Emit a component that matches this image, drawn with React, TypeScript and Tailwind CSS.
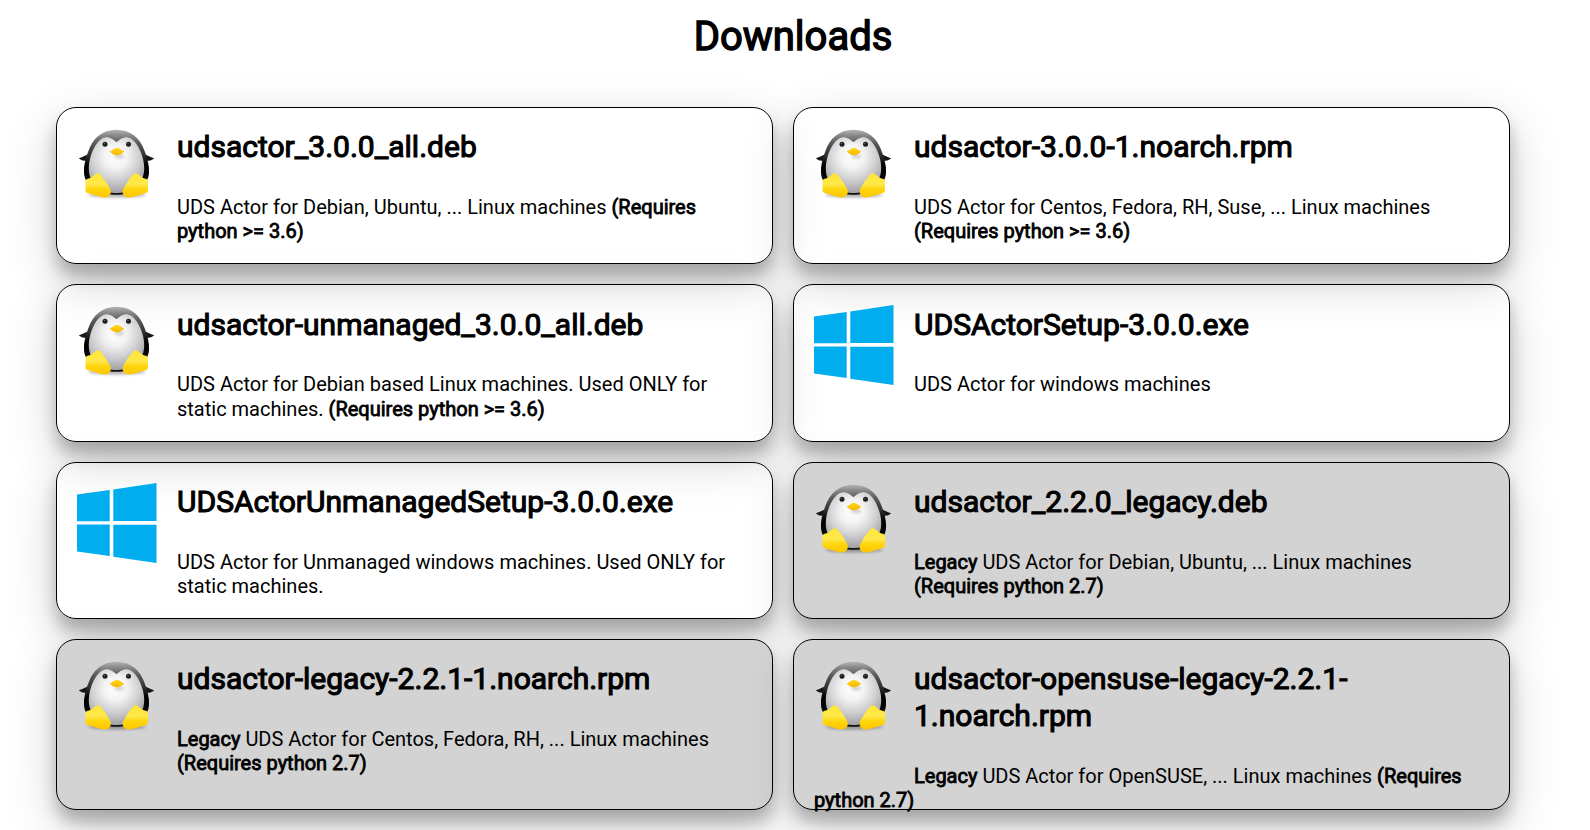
import { useId, type ReactNode } from "react";

function Penguin() {
  const id = useId().replace(/[^a-zA-Z0-9]/g, "");
  const ref = (name: string) => `url(#${name}${id})`;
  return (
    <svg viewBox="0 0 80 80" className="block h-20 w-20" aria-hidden="true">
      <defs>
        <linearGradient id={`coat${id}`} x1="0" y1="0" x2="0" y2="1">
          <stop offset="0" stopColor="#b4b4b4" />
          <stop offset="0.08" stopColor="#8c8c8c" />
          <stop offset="0.2" stopColor="#5c5c5c" />
          <stop offset="0.38" stopColor="#333" />
          <stop offset="0.55" stopColor="#000" />
          <stop offset="1" stopColor="#111" />
        </linearGradient>
        <radialGradient id={`belly${id}`} cx="0.48" cy="0.34" r="0.7">
          <stop offset="0" stopColor="#fff" />
          <stop offset="0.3" stopColor="#f3f3f4" />
          <stop offset="0.62" stopColor="#cfcfd1" />
          <stop offset="1" stopColor="#98989b" />
        </radialGradient>
        <linearGradient id={`foot${id}`} x1="0" y1="0" x2="0" y2="1">
          <stop offset="0" stopColor="#ffe634" />
          <stop offset="0.45" stopColor="#ffe84c" />
          <stop offset="0.65" stopColor="#ffd60c" />
          <stop offset="1" stopColor="#ffc400" />
        </linearGradient>
        <linearGradient id={`beak${id}`} x1="0" y1="0" x2="0" y2="1">
          <stop offset="0" stopColor="#ffd91c" />
          <stop offset="1" stopColor="#f7b500" />
        </linearGradient>
        <filter id={`soft${id}`} x="-20%" y="-100%" width="140%" height="300%">
          <feGaussianBlur stdDeviation="1.6" />
        </filter>
      </defs>
      <g transform="translate(0 0.8)">
        <ellipse cx="40" cy="66" rx="29" ry="2.6" fill="#000" opacity="0.3" filter={ref("soft")} />
        <path d="M10 73h22M48 73h22" stroke="#ffd45a" strokeWidth="3" opacity="0.22" filter={ref("soft")} />
        <path d="M13 25C9 26 6 28.300 1.800 29.500c2 2.200 5 2.700 9 2.700M66 25c4 1 7 3.300 11.200 4.500-2 2.200-5 2.700-9 2.700" fill="#161616" />
        <path
          d="M39.500 1C25 1 15.500 10 11.500 22C8.500 30 6.500 37 7 44C7.500 56 20 66 39.500 66S71.500 56 72 44C72.500 37 70.500 30 67.500 22C63.500 10 54 1 39.500 1Z"
          fill={ref("coat")}
        />
        <path
          d="M39.500 13.500C36.500 11 33.500 8.500 29 8.500C21.500 9 15.500 20 13 30C10 42 12.500 52 20.500 59C26.500 63.500 33.500 64.300 39.500 64.300S52.500 63.500 58.500 59C66.500 52 69 42 66 30C63.500 20 57.500 9 50 8.500C45.500 8.500 42.500 11 39.500 13.500Z"
          fill={ref("belly")}
        />
        <circle cx="28" cy="15.500" r="2.500" fill="#1c1c1c" />
        <circle cx="51.500" cy="15.500" r="2.500" fill="#1c1c1c" />
        <circle cx="27.500" cy="14.800" r="0.700" fill="#777" />
        <circle cx="51" cy="14.800" r="0.700" fill="#777" />
        <ellipse cx="42" cy="27.500" rx="5" ry="2" fill="#777" opacity="0.35" filter={ref("soft")} />
        <path
          d="M32.700 22.700C35.200 21.700 37.700 19 40 19S44.700 21.700 47.200 22.700C45.200 24.800 42.700 26.500 40 26.500S34.700 24.800 32.700 22.700Z"
          fill={ref("beak")}
        />
        <path
          d="M19.500 44.600Q21.300 44 23 45.400C27 49.500 31 55.500 33.600 61C34.700 64.500 32 69 28 68.800Q24 68.600 10 64Q8.500 63.300 8.500 61.500V52.500Q8.500 50.500 10.500 50C14.500 49.500 16.500 46.200 19.500 44.600Z"
          fill={ref("foot")}
        />
        <path
          d="M60 44.600Q58.200 44 56.500 45.400C52.500 49.500 48.500 55.500 45.900 61C44.800 64.500 47.500 69 51.500 68.800Q55.500 68.600 69.500 64Q71 63.300 71 61.500V52.500Q71 50.500 69 50C65 49.500 63 46.200 60 44.600Z"
          fill={ref("foot")}
        />
      </g>
    </svg>
  );
}

function Windows() {
  return (
    <svg viewBox="0 0 80 80" className="block h-20 w-20" fill="#00adef" aria-hidden="true">
      <path d="M0 11.400 32.700 6.900V38.300H0ZM36.300 6.400 79.500 0V38.100H36.300ZM0 41.500H32.700V73L0 68.600ZM36.300 41.800H79.500V80L36.300 73.700Z" />
    </svg>
  );
}

function Strong({ children }: { children: ReactNode }) {
  return <b className="font-normal [-webkit-text-stroke:0.8px_black]">{children}</b>;
}

type Item = { name: string; os: "linux" | "windows"; legacy?: boolean; text: ReactNode };

const items: Item[] = [
  {
    name: "udsactor_3.0.0_all.deb",
    os: "linux",
    text: (
      <>
        UDS Actor for Debian, Ubuntu, ... Linux machines <Strong>(Requires python &gt;= 3.6)</Strong>
      </>
    ),
  },
  {
    name: "udsactor-3.0.0-1.noarch.rpm",
    os: "linux",
    text: (
      <>
        UDS Actor for Centos, Fedora, RH, Suse, ... Linux machines <Strong>(Requires python &gt;= 3.6)</Strong>
      </>
    ),
  },
  {
    name: "udsactor-unmanaged_3.0.0_all.deb",
    os: "linux",
    text: (
      <>
        UDS Actor for Debian based Linux machines. Used ONLY for static machines.{" "}
        <Strong>(Requires python &gt;= 3.6)</Strong>
      </>
    ),
  },
  { name: "UDSActorSetup-3.0.0.exe", os: "windows", text: "UDS Actor for windows machines" },
  {
    name: "UDSActorUnmanagedSetup-3.0.0.exe",
    os: "windows",
    text: "UDS Actor for Unmanaged windows machines. Used ONLY for static machines.",
  },
  {
    name: "udsactor_2.2.0_legacy.deb",
    os: "linux",
    legacy: true,
    text: (
      <>
        <Strong>Legacy</Strong> UDS Actor for Debian, Ubuntu, ... Linux machines{" "}
        <Strong>(Requires python 2.7)</Strong>
      </>
    ),
  },
  {
    name: "udsactor-legacy-2.2.1-1.noarch.rpm",
    os: "linux",
    legacy: true,
    text: (
      <>
        <Strong>Legacy</Strong> UDS Actor for Centos, Fedora, RH, ... Linux machines{" "}
        <Strong>(Requires python 2.7)</Strong>
      </>
    ),
  },
  {
    name: "udsactor-opensuse-legacy-2.2.1-1.noarch.rpm",
    os: "linux",
    legacy: true,
    text: (
      <>
        <Strong>Legacy</Strong> UDS Actor for OpenSUSE, ... Linux machines <Strong>(Requires python 2.7)</Strong>
      </>
    ),
  },
];

export default function App() {
  return (
    <div className="h-[830px] overflow-hidden bg-white pt-3 font-['Roboto',sans-serif] text-[20px] leading-[24.3px] font-normal text-black">
      <h1 className="mb-[46px] pr-1 text-center text-[40px] leading-[49px] font-normal [-webkit-text-stroke:1.4px_black]">
        Downloads
      </h1>
      <main className="ml-14 grid w-[1454px] grid-cols-2 grid-rows-[157.4px_157.4px_157.4px_170.6px] gap-5">
        {items.map((item) => (
          <article
            key={item.name}
            className={`rounded-[20px] border border-black p-5 shadow-[0_12px_16px_0_rgba(0,0,0,0.24),0_17px_50px_0_rgba(0,0,0,0.19)] ${item.legacy ? "bg-[#d3d3d3]" : ""}`}
          >
            <div className="float-left mr-5 mb-[30px]">{item.os === "linux" ? <Penguin /> : <Windows />}</div>
            <h2 className="mb-[29.2px] pt-[1.2px] text-[30px] leading-[36.6px] font-normal [-webkit-text-stroke:1.1px_black]">
              {item.name}
            </h2>
            <p>{item.text}</p>
          </article>
        ))}
      </main>
    </div>
  );
}
